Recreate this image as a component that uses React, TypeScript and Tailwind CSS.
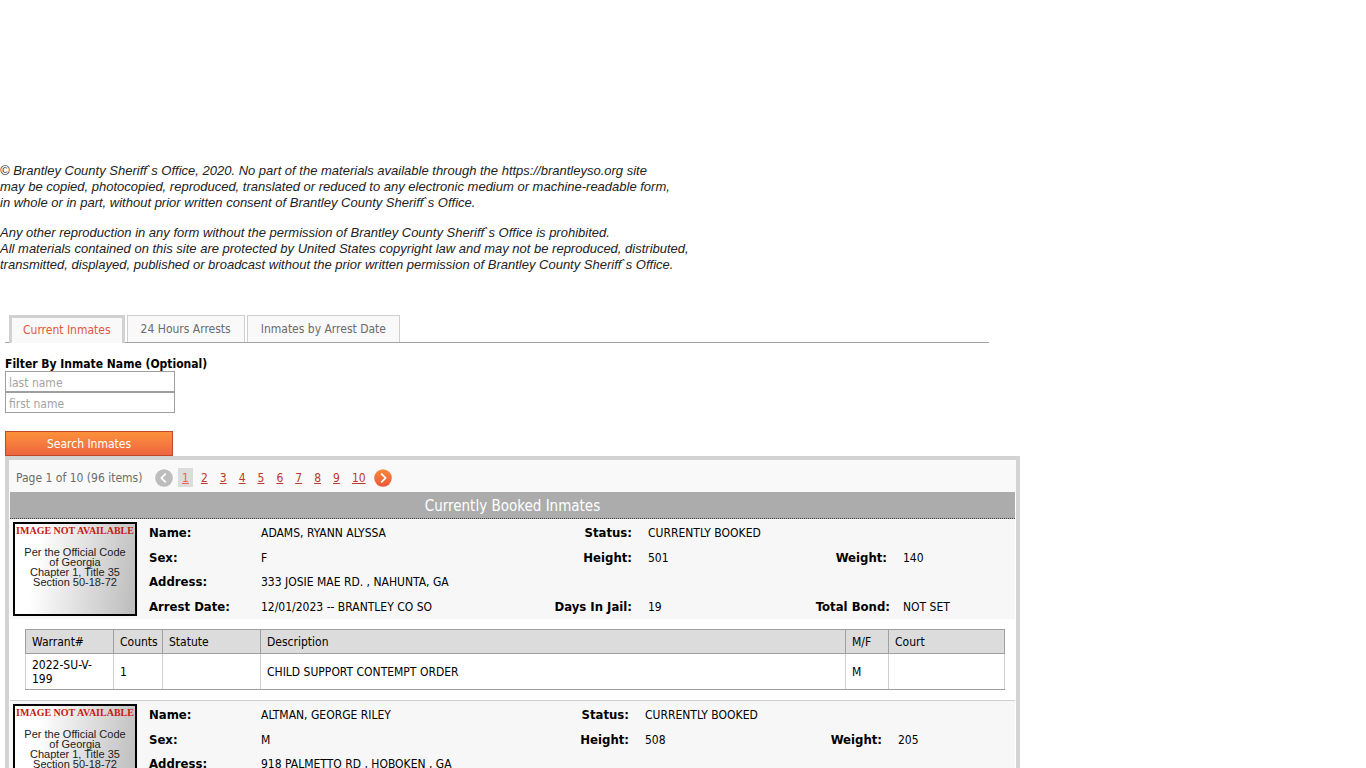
import React from "react";

type Warrant = {
  id: string;
  counts: string;
  statute: string;
  description: string;
  mf: string;
  court: string;
};

type Inmate = {
  name: string;
  sex: string;
  address: string;
  height: string;
  weight: string;
  arrest?: string;
  days?: string;
  bond?: string;
  columns: string;
  warrants: Warrant[];
};

const inmates: Inmate[] = [
  {
    name: "ADAMS, RYANN ALYSSA",
    sex: "F",
    address: "333 JOSIE MAE RD. , NAHUNTA, GA",
    height: "501",
    weight: "140",
    arrest: "12/01/2023 -- BRANTLEY CO SO",
    days: "19",
    bond: "NOT SET",
    columns: "grid-cols-[112px_1fr_96px_168px_90px_122px]",
    warrants: [
      {
        id: "2022-SU-V-199",
        counts: "1",
        statute: "",
        description: "CHILD SUPPORT CONTEMPT ORDER",
        mf: "M",
        court: "",
      },
    ],
  },
  {
    name: "ALTMAN, GEORGE RILEY",
    sex: "M",
    address: "918 PALMETTO RD , HOBOKEN , GA",
    height: "508",
    weight: "205",
    columns: "grid-cols-[112px_1fr_96px_168px_88px_127px]",
    warrants: [],
  },
];

const pages = ["1", "2", "3", "4", "5", "6", "7", "8", "9", "10"];

function Label({ children, right }: { children: React.ReactNode; right?: boolean }) {
  return (
    <dt className={right ? "text-right text-[13px] font-bold" : "text-[13px] font-bold"}>{children}</dt>
  );
}

function PhotoPlaceholder() {
  return (
    <div className="h-[94px] w-[124px] shrink-0 overflow-hidden border-2 border-black bg-linear-100 from-white from-20% to-[#bcbcbc] text-center whitespace-nowrap">
      <p className="font-['Liberation_Serif',serif] text-[10px] leading-[14px] font-bold text-[#c8180f]">
        IMAGE NOT AVAILABLE
      </p>
      <p className="mt-[9px] font-['Liberation_Sans',sans-serif] text-[11px] leading-[10px] text-[#222]">
        Per the Official Code
        <br />
        of Georgia
        <br />
        Chapter 1, Title 35
        <br />
        Section 50-18-72
      </p>
    </div>
  );
}

function WarrantTable({ rows }: { rows: Warrant[] }) {
  const head = "border border-[#9f9f9f] bg-[#dcdcdc] px-1.5 text-left font-normal";
  const cell = "border-x border-y border-x-[#cfcfcf] border-y-[#9f9f9f] px-1.5 leading-[14px]";
  return (
    <div className="py-[10px] pr-[10px] pl-[15px]">
      <table className="w-full table-fixed border-collapse border border-[#9f9f9f]">
        <colgroup>
          <col className="w-[88px]" />
          <col className="w-[49px]" />
          <col className="w-[98px]" />
          <col />
          <col className="w-[43px]" />
          <col className="w-[116px]" />
        </colgroup>
        <thead>
          <tr className="h-6">
            <th className={head}>Warrant#</th>
            <th className={head}>Counts</th>
            <th className={head}>Statute</th>
            <th className={head}>Description</th>
            <th className={head}>M/F</th>
            <th className={head}>Court</th>
          </tr>
        </thead>
        <tbody>
          {rows.map((w) => (
            <tr key={w.id} className="h-9">
              <td className={cell}>{w.id}</td>
              <td className={cell}>{w.counts}</td>
              <td className={cell}>{w.statute}</td>
              <td className={cell}>{w.description}</td>
              <td className={cell}>{w.mf}</td>
              <td className={cell}>{w.court}</td>
            </tr>
          ))}
        </tbody>
      </table>
    </div>
  );
}

function Record({ inmate }: { inmate: Inmate }) {
  return (
    <article className="border-b border-[#cfcfcf]">
      <div className="flex gap-3 bg-[#f7f7f7] px-[3px]">
        <div className="py-[3px]">
          <PhotoPlaceholder />
        </div>
        <dl className={`grid flex-1 grid-rows-4 items-center pt-0.5 ${inmate.columns}`}>
          <Label>Name:</Label>
          <dd>{inmate.name}</dd>
          <Label right>Status:</Label>
          <dd className="col-span-3 pl-4">CURRENTLY BOOKED</dd>
          <Label>Sex:</Label>
          <dd>{inmate.sex}</dd>
          <Label right>Height:</Label>
          <dd className="pl-4">{inmate.height}</dd>
          <Label right>
            <span className="pr-[3px]">Weight:</span>
          </Label>
          <dd className="pl-[13px]">{inmate.weight}</dd>
          <Label>Address:</Label>
          <dd className="col-span-5">{inmate.address}</dd>
          {inmate.arrest && (
            <>
              <Label>Arrest Date:</Label>
              <dd>{inmate.arrest}</dd>
              <Label right>Days In Jail:</Label>
              <dd className="pl-4">{inmate.days}</dd>
              <Label right>Total Bond:</Label>
              <dd className="pl-[13px]">{inmate.bond}</dd>
            </>
          )}
        </dl>
      </div>
      {inmate.warrants.length > 0 && <WarrantTable rows={inmate.warrants} />}
    </article>
  );
}

function Arrow({ next }: { next?: boolean }) {
  return (
    <svg viewBox="0 0 18 18" className="size-[18px]" aria-hidden="true">
      <defs>
        <linearGradient id="arrow-orange" x1="0" y1="0" x2="0" y2="1">
          <stop offset="0" stopColor="#f98a3c" />
          <stop offset="1" stopColor="#e9573a" />
        </linearGradient>
      </defs>
      <circle cx="9" cy="9" r="8.8" fill={next ? "url(#arrow-orange)" : "#bdbdbd"} />
      <path
        d={next ? "M7.2 4.6 11.6 9l-4.4 4.4" : "M10.8 4.6 6.4 9l4.4 4.4"}
        fill="none"
        stroke="#fff"
        strokeWidth="1.7"
      />
    </svg>
  );
}

function Pager() {
  return (
    <nav aria-label="Pages" className="flex h-8 items-center bg-[#f9f9f9] pt-[3px] pl-[7px] text-[#6b6b6b]">
      <span className="w-[139px]">Page 1 of 10 (96 items)</span>
      <button type="button" disabled aria-label="Previous page">
        <Arrow />
      </button>
      <div className="mr-1 ml-[5px] flex gap-1 text-[#b8392e]">
        {pages.map((p) => (
          <a
            key={p}
            href={`#page-${p}`}
            className={
              p === "1"
                ? "bg-[#dcdcdc] px-1 pt-px leading-[18px] text-[#f0624a] underline"
                : "px-1 pt-px leading-[18px] underline"
            }
          >
            {p}
          </a>
        ))}
      </div>
      <button type="button" aria-label="Next page">
        <Arrow next />
      </button>
    </nav>
  );
}

export default function App() {
  const tab = "h-[27px] border border-b-0 border-[#cfcfcf] bg-[#f9f9f9] px-[13px] text-[#6b6b6b]";
  const field =
    "block h-[21px] w-[170px] border border-[#9f9f9f] bg-white px-[3px] pt-0.5 text-black outline-none placeholder:text-[#a3a3a3] placeholder:opacity-100";
  return (
    <main className="bg-white pt-[163px] font-['DejaVu_Sans_Condensed','DejaVu_Sans',sans-serif] text-[12px] leading-[14px] text-black">
      <div className="font-['Liberation_Sans',sans-serif] text-[13px] leading-4 text-[#222] italic">
        <p>
          © Brantley County Sheriff`s Office, 2020. No part of the materials available through the
          https://brantleyso.org site
          <br />
          may be copied, photocopied, reproduced, translated or reduced to any electronic medium or
          machine-readable form,
          <br />
          in whole or in part, without prior written consent of Brantley County Sheriff`s Office.
        </p>
        <p className="mt-3.5">
          Any other reproduction in any form without the permission of Brantley County Sheriff`s Office is
          prohibited.
          <br />
          All materials contained on this site are protected by United States copyright law and may not be
          reproduced, distributed,
          <br />
          transmitted, displayed, published or broadcast without the prior written permission of Brantley
          County Sheriff`s Office.
        </p>
      </div>

      <div className="mt-[42px] px-[5px]">
        <div
          role="tablist"
          className="flex max-w-[984px] gap-0.5 border-b border-[#a3a3a3] pl-1"
        >
          <button
            type="button"
            role="tab"
            aria-selected="true"
            className="-mb-px h-7 border-3 border-b-0 border-[#d1d1d1] bg-[#f9f9f9] px-[11px] pb-0.5 text-[#e0573f]"
          >
            Current Inmates
          </button>
          <button type="button" role="tab" aria-selected="false" className={tab}>
            24 Hours Arrests
          </button>
          <button type="button" role="tab" aria-selected="false" className={tab}>
            Inmates by Arrest Date
          </button>
        </div>

        <form className="mt-3.5" onSubmit={(e) => e.preventDefault()}>
          <label htmlFor="last-name" className="block font-bold">
            Filter By Inmate Name (Optional)
          </label>
          <input id="last-name" type="text" placeholder="last name" className={field} />
          <input
            id="first-name"
            type="text"
            aria-label="First name"
            placeholder="first name"
            className={field}
          />
          <button
            type="submit"
            className="mt-[18px] block h-[25px] w-[168px] border border-[#c0492c] bg-linear-to-b from-[#fb9139] to-[#ee6440] text-white"
          >
            Search Inmates
          </button>
        </form>

        <section className="max-w-[1015px] border-4 border-[#d3d3d3]">
          <Pager />
          <div className="px-px">
            <h1 className="border-b border-dotted border-[#444] bg-[#acacac] pt-0.5 text-center text-[15px] leading-6 text-white">
              Currently Booked Inmates
            </h1>
            {inmates.map((i) => (
              <Record key={i.name} inmate={i} />
            ))}
          </div>
        </section>
      </div>
    </main>
  );
}
